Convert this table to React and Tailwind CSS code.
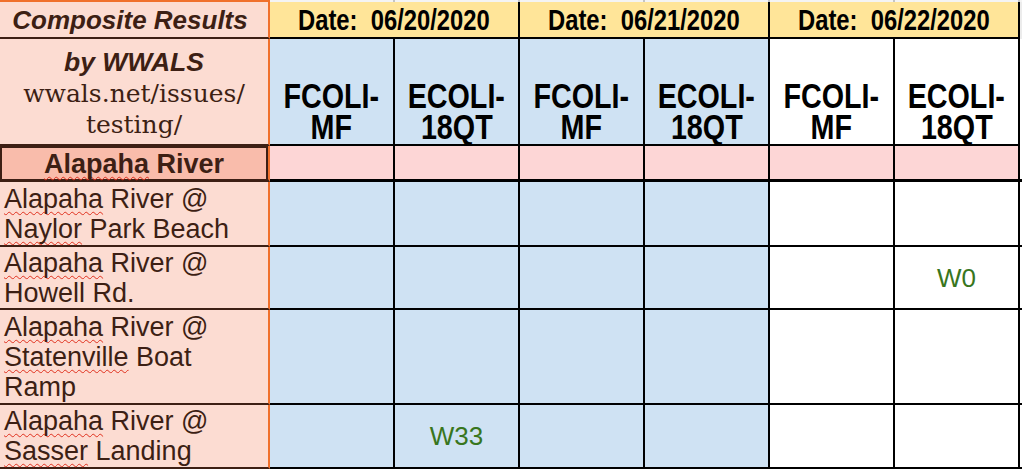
import React from "react";

const LEFT = "border-r-2 border-r-[#f0702c] border-b-2 border-b-[#3d1f14] bg-[#fcdcd2]";
const DATA = "border-r-2 border-b-2 border-black";
const BLUE = "bg-[#cfe2f3]";
const WHITE = "bg-white";
const SERIF = { fontFamily: '"DejaVu Serif", "Liberation Serif", serif' };

// spell-check squiggle, like the sheet shows under unknown words
function Sq({ children }) {
  return (
    <span className="underline decoration-wavy decoration-[#e0301e] decoration-1 underline-offset-[3px] [text-decoration-skip-ink:none]">
      {children}
    </span>
  );
}

const SITES = [
  { h: "h-[65px]", lines: [[<Sq key="a">Alapaha</Sq>, " River @"], [<Sq key="n">Naylor</Sq>, " Park Beach"]], cells: {} },
  { h: "h-[63px]", lines: [[<Sq key="a">Alapaha</Sq>, " River @"], ["Howell Rd."]], cells: { 5: "W0" } },
  {
    h: "h-[95px]",
    lines: [[<Sq key="a">Alapaha</Sq>, " River @"], [<Sq key="s">Statenville</Sq>, " Boat"], ["Ramp"]],
    cells: {},
  },
  { h: "h-[64px]", lines: [[<Sq key="a">Alapaha</Sq>, " River @"], [<Sq key="s">Sasser</Sq>, " Landing"]], cells: { 1: "W33" } },
];

const PARAMS = [
  ["FCOLI-", "MF"],
  ["ECOLI-", "18QT"],
  ["FCOLI-", "MF"],
  ["ECOLI-", "18QT"],
  ["FCOLI-", "MF"],
  ["ECOLI-", "18QT"],
];

export default function App() {
  return (
    <div
      className="w-[1022px] h-[471px] overflow-hidden bg-white"
      style={{ fontFamily: '"Liberation Sans", Arial, sans-serif' }}
    >
      <div className="grid grid-cols-[270px_repeat(6,125px)_1fr]">
        {/* thin strip of the row above */}
        <div className="h-[2px] bg-[#f0702c]" />
        {PARAMS.map((_, i) => (
          <div key={i} className="h-[2px] bg-[#f4f4f4] border-r-2 border-[#c4c4c4]" />
        ))}
        <div className="h-[2px] bg-[#f4f4f4]" />

        {/* dates */}
        <div className={`${LEFT} h-[37px] flex items-center justify-center pr-[8px]`}>
          <span className="italic font-bold text-[26px] leading-none text-[#3d1f14]">Composite Results</span>
        </div>
        {["06/20/2020", "06/21/2020", "06/22/2020"].map((d) => (
          <div key={d} className={`${DATA} col-span-2 h-[37px] bg-[#ffe599] flex items-center justify-center`}>
            <span className="inline-block scale-x-[0.82] font-bold text-[29px] leading-none text-black whitespace-pre pt-[2px]">
              {`Date:  ${d}`}
            </span>
          </div>
        ))}
        <div className="h-[37px] bg-[#ececec]" />

        {/* parameter header */}
        <div className={`${LEFT} h-[107px] flex flex-col items-center justify-end pb-[4px] text-[#3d1f14]`}>
          <span className="italic font-bold text-[26.5px] leading-[31px]">by WWALS</span>
          <span className="text-[25px] leading-[31px]" style={SERIF}>
            wwals.net/issues/
          </span>
          <span className="text-[25px] leading-[31px]" style={SERIF}>
            testing/
          </span>
        </div>
        {PARAMS.map(([a, b], i) => (
          <div
            key={i}
            className={`${DATA} ${i < 4 ? BLUE : WHITE} h-[107px] flex flex-col items-center justify-end pb-[2px] text-black font-bold text-[35px] leading-[31px]`}
          >
            <span className="inline-block scale-x-[0.82]">{a}</span>
            <span className="inline-block scale-x-[0.82]">{b}</span>
          </div>
        ))}
        <div className="h-[107px] bg-white" />

        {/* river group */}
        <div className="h-[36px] bg-[#fcdcd2] border-r-2 border-r-[#f0702c] border-b-[3px] border-b-[#3d1f14]">
          <div className="h-full border-2 border-b-0 border-[#3d1f14] bg-[#f9bcab] flex items-center justify-center">
            <span className="font-bold text-[27px] leading-none text-[#3d1f14] pt-[2px]">
              <Sq>Alapaha</Sq> River
            </span>
          </div>
        </div>
        {PARAMS.map((_, i) => (
          <div key={i} className="h-[36px] bg-[#fdd6d6] border-r-2 border-b-[3px] border-black" />
        ))}
        <div className="h-[36px] bg-white border-b-[3px] border-black" />

        {/* sites */}
        {SITES.map((s, r) => (
          <React.Fragment key={r}>
            <div className={`${LEFT} ${s.h} flex flex-col justify-center pl-[4px] text-[27px] leading-[30px] text-[#3d1f14]`}>
              {s.lines.map((l, k) => (
                <span key={k} className="whitespace-nowrap">{l}</span>
              ))}
            </div>
            {PARAMS.map((_, i) => (
              <div key={i} className={`${DATA} ${i < 4 ? BLUE : WHITE} ${s.h} flex items-center justify-center`}>
                {s.cells[i] && <span className="text-[26px] text-[#38761d] leading-none">{s.cells[i]}</span>}
              </div>
            ))}
            <div className={`${s.h} bg-white border-b-2 border-black`} />
          </React.Fragment>
        ))}
      </div>
    </div>
  );
}
